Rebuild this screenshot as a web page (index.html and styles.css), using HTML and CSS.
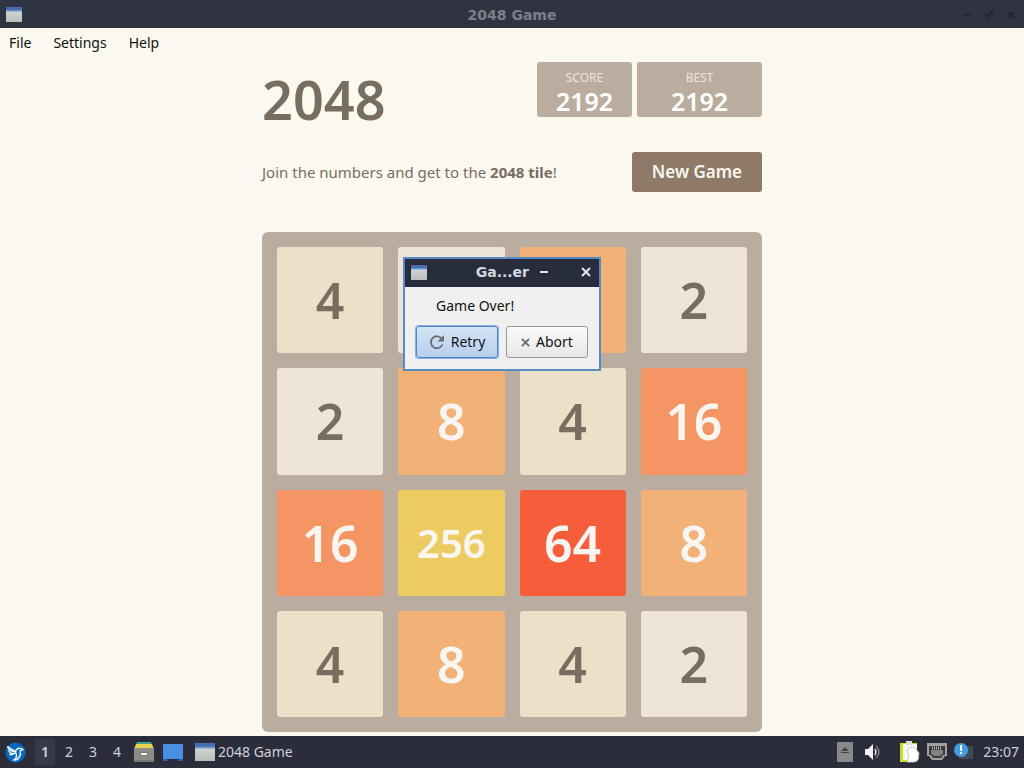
FILE: index.html
```html
<!DOCTYPE html>
<html lang="en">
<head>
<meta charset="utf-8">
<meta name="viewport" content="width=device-width, initial-scale=1">
<title>2048 Game</title>
<link rel="stylesheet" href="styles.css">
</head>
<body class="desktop">
<svg class="defs" width="0" height="0" aria-hidden="true">
  <defs>
    <linearGradient id="pane" x1="0" y1="0" x2="0" y2="1"><stop offset="0" stop-color="#d9dcdd"/><stop offset="1" stop-color="#b9bfb9"/></linearGradient>
    <symbol id="window" viewBox="0 0 16 15" preserveAspectRatio="none"><path fill="url(#pane)" d="M0 0h16v15H0z"/><path fill="#466daf" d="M0 0h16v4H0z"/><path fill="#6c94c6" d="M0 3h16v1.500H0z"/></symbol>
  </defs>
</svg>

<header class="titlebar">
  <svg class="app-icon"><use href="#window"/></svg>
  <h1 class="titlebar-text">2048 Game</h1>
  <div class="window-controls">
    <button type="button" aria-label="Minimize"><svg viewBox="0 0 10 10"><path d="M1 5h8"/></svg></button>
    <button type="button" aria-label="Restore"><svg viewBox="0 0 10 10"><path d="M1 5h4v4M5 5l4-3M5 2h4v3"/></svg></button>
    <button type="button" aria-label="Close"><svg viewBox="0 0 10 10"><path d="M2 2l6 6M8 2L2 8"/></svg></button>
  </div>
</header>

<nav class="menu" aria-label="Menu bar">
  <button type="button">File</button>
  <button type="button">Settings</button>
  <button type="button">Help</button>
</nav>

<main class="game">
  <div class="game-header">
    <h2 class="game-title">2048</h2>
    <div class="scores">
      <div class="score"><span class="score-label">SCORE</span><span class="score-value">2192</span></div>
      <div class="score score-best"><span class="score-label">BEST</span><span class="score-value">2192</span></div>
    </div>
  </div>
  <div class="intro">
    <p class="intro-text">Join the numbers and get to the <strong>2048 tile</strong>!</p>
    <button type="button" class="new-game">New Game</button>
  </div>
  <div class="board">
    <div class="tile t4">4</div><div class="tile t2"></div><div class="tile t8"></div><div class="tile t2">2</div>
    <div class="tile t2">2</div><div class="tile t8">8</div><div class="tile t4">4</div><div class="tile t16">16</div>
    <div class="tile t16">16</div><div class="tile t256">256</div><div class="tile t64">64</div><div class="tile t8">8</div>
    <div class="tile t4">4</div><div class="tile t8">8</div><div class="tile t4">4</div><div class="tile t2">2</div>
    <section class="dialog" role="dialog" aria-labelledby="dialog-title">
      <div class="dialog-titlebar">
        <svg class="app-icon"><use href="#window"/></svg>
        <h2 class="dialog-title" id="dialog-title">Ga...er</h2>
        <button type="button" class="dialog-min" aria-label="Minimize"><svg viewBox="0 0 10 10"><path d="M1 5h8"/></svg></button>
        <button type="button" class="dialog-close" aria-label="Close"><svg viewBox="0 0 10 10"><path d="M1 1l8 8M9 1L1 9"/></svg></button>
      </div>
      <p class="dialog-message">Game Over!</p>
      <div class="dialog-actions">
        <button type="button" class="action action-default"><svg class="retry-icon" viewBox="0 0 16 16"><path fill="none" stroke="#686e75" stroke-width="1.800" d="M13 5A6 6 0 1 0 13.500 10.500"/><path fill="#686e75" d="M15 1v6.500H8.500z"/></svg>Retry</button>
        <button type="button" class="action"><svg class="abort-icon" viewBox="0 0 10 10"><path fill="none" stroke="#6a6a6a" stroke-width="2" d="M1 1l8 8M9 1L1 9"/></svg>Abort</button>
      </div>
    </section>
  </div>
</main>

<footer class="taskbar">
  <button type="button" class="start" aria-label="Applications">
    <svg viewBox="0 0 22 22"><circle cx="11" cy="11" r="10.500" fill="#0869bd"/><g fill="none" stroke="#e8f3fb" stroke-width="1.500" stroke-linejoin="round" stroke-linecap="round"><path d="M3 5c1 4 4 5 8 5 1-3 3-4 6-3l2 1-3 1c1 6-2 10-7 10 3-2 4-5 2-8"/><path d="M4 9c1 3 4 4 7 2M5 13c2 1 4 0 6-2M3 5l8 5"/></g></svg>
  </button>
  <div class="workspaces">
    <button type="button" class="current">1</button><button type="button">2</button><button type="button">3</button><button type="button">4</button>
  </div>
  <button type="button" class="launcher" aria-label="Files">
    <svg viewBox="0 0 20 20"><path fill="#3ba58b" d="M3 0h14l1 3H2z"/><path fill="#e8d34e" d="M2 2h16l2 5H0z"/><path fill="#8c8c87" d="M0 6h20v14H0z"/><path fill="#777773" d="M0 18h20v2H0z"/><rect x="6" y="10" width="8" height="4" rx="1" fill="#777"/><path fill="#fff" d="M7 11h6v2H7z"/></svg>
  </button>
  <button type="button" class="launcher desktop-button" aria-label="Show desktop">
    <svg viewBox="0 0 20 17"><path fill="#4a8fe4" d="M0 0h20v16h-4v-1H4v1H0z"/><path fill="#2e63b4" d="M0 15h4l1 2H0zM16 15h4v2h-5z"/></svg>
  </button>
  <button type="button" class="task"><svg viewBox="0 0 16 15" preserveAspectRatio="none"><use href="#window"/></svg>2048 Game</button>
  <div class="tray">
    <button type="button" aria-label="Removable media"><svg width="16" height="20" viewBox="0 0 16 20"><path fill="#88898a" d="M0 0h16v20H0z"/><path fill="#454545" d="M8 5l4 4H4zM4 10h8v1H4z"/></svg></button>
    <button type="button" class="volume" aria-label="Volume"><svg width="16" height="16" viewBox="0 0 16 16"><path fill="#f2f2f2" d="M0 5h3l5-5v16l-5-5H0z"/><path fill="none" stroke="#d8d8dc" stroke-width="1.500" d="M10 5q2 3 0 6"/><path fill="none" stroke="#777b84" stroke-width="1.500" d="M11 2q6 6 0 12"/></svg></button>
    <button type="button" class="clipboard" aria-label="Clipboard"><svg width="20" height="22" viewBox="0 0 20 22"><path fill="#c9dc27" d="M0 2h17v19H0z"/><path fill="#f7f7ef" d="M3 3h14v16H3z"/><path fill="#ddd" d="M6 0h6v4H6z"/><path fill="#fff" stroke="#c8c8c8" d="M7 9l4-3 4 1 4 5-1 7-4 2H7l2-5z"/></svg></button>
    <button type="button" aria-label="Network"><svg width="20" height="18" viewBox="0 0 20 18"><path fill="#a0a19e" d="M0 0h20v13h-2l-3 4H5l-3-4H0z"/><path fill="#3b3c3b" d="M2 3h16v9h-2l-2 3H6l-2-3H2z"/><path fill="#82837f" d="M4 7h12v4h-1l-2 2H7l-2-2H4z"/><path stroke="#aaa" stroke-dasharray="1 1" d="M5 5h10" stroke-width="3"/></svg></button>
    <button type="button" aria-label="Notifications"><svg width="20" height="18" viewBox="0 0 20 18"><path fill="#414a50" d="M9 3h10v13H5v-5z"/><circle cx="7" cy="7" r="7" fill="#419ce4"/><path fill="#fff" d="M6 2h2v6H6zM6 9h2v2H6z"/></svg></button>
    <time class="clock">23:07</time>
  </div>
</footer>
</body>
</html>
```
FILE: styles.css
```css
* { box-sizing: border-box; }

button {
  padding: 0;
  border: 0;
  background: none;
  color: inherit;
  font: inherit;
}

svg { display: block; }

.defs { position: absolute; }

.desktop {
  display: flex;
  flex-direction: column;
  min-height: 100vh;
  margin: 0;
  background: #fbf8ef;
  color: #111;
  font: 14px/20px "Noto Sans", "Open Sans", sans-serif;
}

.titlebar {
  display: grid;
  grid-template-columns: 1fr auto 1fr;
  align-items: center;
  height: 28px;
  padding: 0 6px;
  background: #303441;
  color: #7b7f89;
}

.titlebar-text,
.dialog-title {
  margin: 0;
  font: bold 14px/20px "DejaVu Sans", sans-serif;
}

.titlebar-text { padding-top: 2px; }

.app-icon { width: 16px; height: 15px; }

.window-controls {
  display: flex;
  justify-content: flex-end;
  gap: 12px;
  padding: 2px 2px 0 0;
}

.window-controls svg {
  width: 10px;
  height: 10px;
  fill: none;
  stroke: #222837;
  stroke-width: 2px;
}

.menu {
  display: flex;
  gap: 22px;
  padding: 5px 9px;
}

.game {
  width: 500px;
  max-width: 100%;
  margin: 0 auto;
  padding: 4px 0;
  color: #776e60;
}

.game-header,
.intro {
  display: flex;
  align-items: center;
  justify-content: space-between;
}

.game-header {
  align-items: flex-start;
  height: 90px;
}

.game-title {
  margin: 0;
  font-size: 54px;
  font-weight: 600;
  line-height: 74px;
}

.scores { display: flex; gap: 5px; }

.score {
  display: flex;
  flex-direction: column;
  align-items: center;
  min-width: 95px;
  height: 55px;
  padding-top: 6px;
  border-radius: 3px;
  background: #baada0;
}

.score-best { min-width: 125px; }

.score-label {
  color: #eee4da;
  font-size: 12px;
  line-height: 20px;
}

.score-value {
  color: #fff;
  font-size: 25px;
  font-weight: 600;
  line-height: 26px;
}

.intro { margin-bottom: 40px; }

.intro-text {
  margin: 0;
  font-size: 15px;
}

.new-game {
  height: 40px;
  padding: 0 20px;
  border-radius: 3px;
  background: #8e7a66;
  color: #f9f6f2;
  font-size: 17px;
  font-weight: 600;
}

.board {
  position: relative;
  display: grid;
  grid-template-columns: repeat(4, 1fr);
  gap: 15px;
  padding: 15px;
  border-radius: 6px;
  background: #baada0;
}

.tile {
  display: flex;
  align-items: center;
  justify-content: center;
  aspect-ratio: 1;
  border-radius: 3px;
  color: #f9f6f2;
  font-size: 50px;
  font-weight: 600;
}

.t2 { background: #eee4da; color: #776e60; }
.t4 { background: #ece0c8; color: #776e60; }
.t8 { background: #f1b177; }
.t16 { background: #f59563; }
.t64 { background: #f65d3b; }
.t256 { background: #eccc61; font-size: 40px; }

.dialog {
  position: absolute;
  top: 25px;
  left: 141px;
  width: 198px;
  border: 2px solid #578bc4;
  background: #f0f0f0;
  color: #111;
}

.dialog-titlebar {
  display: flex;
  align-items: center;
  height: 28px;
  padding: 0 8px 2px 6px;
  background: #282d3d;
  color: #d5d8df;
}

.dialog-title { margin: 0 10px 0 auto; }

.dialog-titlebar button svg {
  width: 10px;
  height: 10px;
  fill: none;
  stroke: #e4e6ea;
  stroke-width: 2px;
}

.dialog-min { margin-right: 32px; }

.dialog-message { margin: 9px 31px; }

.dialog-actions {
  display: grid;
  grid-template-columns: 1fr 1fr;
  gap: 8px;
  padding: 1px 11px 11px;
}

.action {
  display: flex;
  align-items: center;
  justify-content: center;
  gap: 6px;
  height: 32px;
  border: 1px solid #999;
  border-radius: 3px;
  background: linear-gradient(#fafafa, #e7e7e7);
}

.action-default {
  border-color: #4d84d0;
  box-shadow: 0 0 0 1px #85afe6;
  background: linear-gradient(#d3e3f5, #b8d0ec);
}

.retry-icon { width: 16px; height: 16px; }
.abort-icon { width: 9px; height: 9px; }

.taskbar {
  display: flex;
  align-items: center;
  height: 32px;
  margin-top: auto;
  padding: 0 5px;
  background: #2b2d3b;
  color: #cfd2dc;
}

.start svg { width: 21px; height: 21px; }

.workspaces {
  display: flex;
  margin: 0 5px 0 7px;
}

.workspaces button { width: 24px; height: 32px; }

.workspaces .current {
  height: 26px;
  margin: 3px 2px;
  width: 20px;
  background: #363a49;
  font-weight: 600;
}

.launcher svg { width: 20px; height: 20px; }
.desktop-button { margin-left: 9px; }
.desktop-button svg { height: 17px; }

.task {
  display: flex;
  align-items: center;
  gap: 3px;
  margin-left: 12px;
}

.task svg { width: 20px; height: 18px; }

.tray {
  display: flex;
  align-items: center;
  gap: 7px;
  margin-left: auto;
}

.volume { margin: 0 12px 0 5px; }

.clock { margin-left: 2px; }
```
